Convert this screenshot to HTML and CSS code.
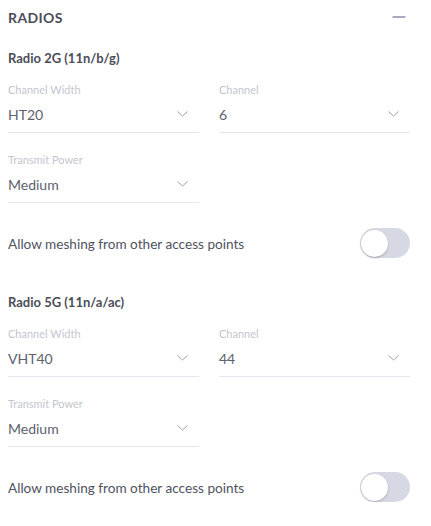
FILE: index.html
```html
<!DOCTYPE html>
<html lang="en">
<head>
    <meta charset="UTF-8">
    <meta name="viewport" content="width=device-width, initial-scale=1.0">
    <title>Radios</title>
    <link rel="stylesheet" href="styles.css">
</head>
<body>
    <div class="panel">
        <div class="panel-head">
            <h2>RADIOS</h2>
            <svg class="collapse" width="14" height="4" viewBox="0 0 14 4">
                <line x1="0.5" y1="2" x2="13.5" y2="2" stroke="#8c90a8" stroke-width="1.5"/>
            </svg>
        </div>

        <div class="section">
            <h3>Radio 2G (11n/b/g)</h3>
            <div class="fields">
                <div class="field">
                    <div class="label">Channel Width</div>
                    <div class="select">
                        <span>HT20</span>
                        <svg class="chevron" width="11" height="6" viewBox="0 0 11 6"><polyline points="0.5,0.5 5.5,5 10.5,0.5" fill="none" stroke="#9ea2b0" stroke-width="1"/></svg>
                    </div>
                </div>
                <div class="field">
                    <div class="label">Channel</div>
                    <div class="select">
                        <span>6</span>
                        <svg class="chevron" width="11" height="6" viewBox="0 0 11 6"><polyline points="0.5,0.5 5.5,5 10.5,0.5" fill="none" stroke="#9ea2b0" stroke-width="1"/></svg>
                    </div>
                </div>
                <div class="field">
                    <div class="label">Transmit Power</div>
                    <div class="select">
                        <span>Medium</span>
                        <svg class="chevron" width="11" height="6" viewBox="0 0 11 6"><polyline points="0.5,0.5 5.5,5 10.5,0.5" fill="none" stroke="#9ea2b0" stroke-width="1"/></svg>
                    </div>
                </div>
            </div>
            <div class="toggle-row">
                <span class="toggle-text">Allow meshing from other access points</span>
                <div class="toggle"><div class="knob"></div></div>
            </div>
        </div>

        <div class="section">
            <h3>Radio 5G (11n/a/ac)</h3>
            <div class="fields">
                <div class="field">
                    <div class="label">Channel Width</div>
                    <div class="select">
                        <span>VHT40</span>
                        <svg class="chevron" width="11" height="6" viewBox="0 0 11 6"><polyline points="0.5,0.5 5.5,5 10.5,0.5" fill="none" stroke="#9ea2b0" stroke-width="1"/></svg>
                    </div>
                </div>
                <div class="field">
                    <div class="label">Channel</div>
                    <div class="select">
                        <span>44</span>
                        <svg class="chevron" width="11" height="6" viewBox="0 0 11 6"><polyline points="0.5,0.5 5.5,5 10.5,0.5" fill="none" stroke="#9ea2b0" stroke-width="1"/></svg>
                    </div>
                </div>
                <div class="field">
                    <div class="label">Transmit Power</div>
                    <div class="select">
                        <span>Medium</span>
                        <svg class="chevron" width="11" height="6" viewBox="0 0 11 6"><polyline points="0.5,0.5 5.5,5 10.5,0.5" fill="none" stroke="#9ea2b0" stroke-width="1"/></svg>
                    </div>
                </div>
            </div>
            <div class="toggle-row">
                <span class="toggle-text">Allow meshing from other access points</span>
                <div class="toggle"><div class="knob"></div></div>
            </div>
        </div>
    </div>
</body>
</html>
```

FILE: styles.css
```css
body {
    font-family: Lato, "Open Sans", sans-serif;
    margin: 0;
    background-color: #fff;
    color: #50545f;
}
.panel {
    padding: 0 21px 0 8px;
}
.panel-head {
    display: flex;
    justify-content: space-between;
    align-items: center;
    height: 34px;
}
.panel-head h2 {
    margin: 0;
    font-size: 14px;
    font-weight: 700;
    letter-spacing: 0.4px;
    color: #4a4d57;
}
.collapse {
    margin-right: 4px;
    display: block;
}
.section {
    margin-top: 15px;
}
.section + .section {
    margin-top: 35px;
}
h3 {
    margin: 0;
    font-size: 13px;
    line-height: 18px;
    font-weight: 700;
    color: #4a4d57;
}
.fields {
    display: grid;
    grid-template-columns: 1fr 1fr;
    column-gap: 20px;
    row-gap: 19px;
    margin-top: 15px;
}
.label {
    font-size: 11px;
    line-height: 16px;
    color: #c3c6cf;
    margin-bottom: 6px;
}
.select {
    display: flex;
    justify-content: space-between;
    align-items: center;
    height: 20px;
    padding: 0 11px 8px 0;
    border-bottom: 1px solid #e4e6ec;
    font-size: 14px;
    color: #5d616c;
}
.chevron {
    display: block;
}
.toggle-row {
    display: flex;
    justify-content: space-between;
    align-items: center;
    margin-top: 25px;
    height: 30px;
    font-size: 13.6px;
    color: #4f535e;
}
.toggle-text {
    padding-top: 2px;
}
.toggle {
    width: 50px;
    height: 30px;
    border-radius: 15px;
    background-color: #d6d9e3;
    display: flex;
    align-items: center;
    padding-left: 1px;
    box-sizing: border-box;
}
.knob {
    width: 27px;
    height: 27px;
    border-radius: 50%;
    background-color: #fff;
    box-shadow: 0 1px 2px rgba(0, 0, 0, 0.25);
}
```
